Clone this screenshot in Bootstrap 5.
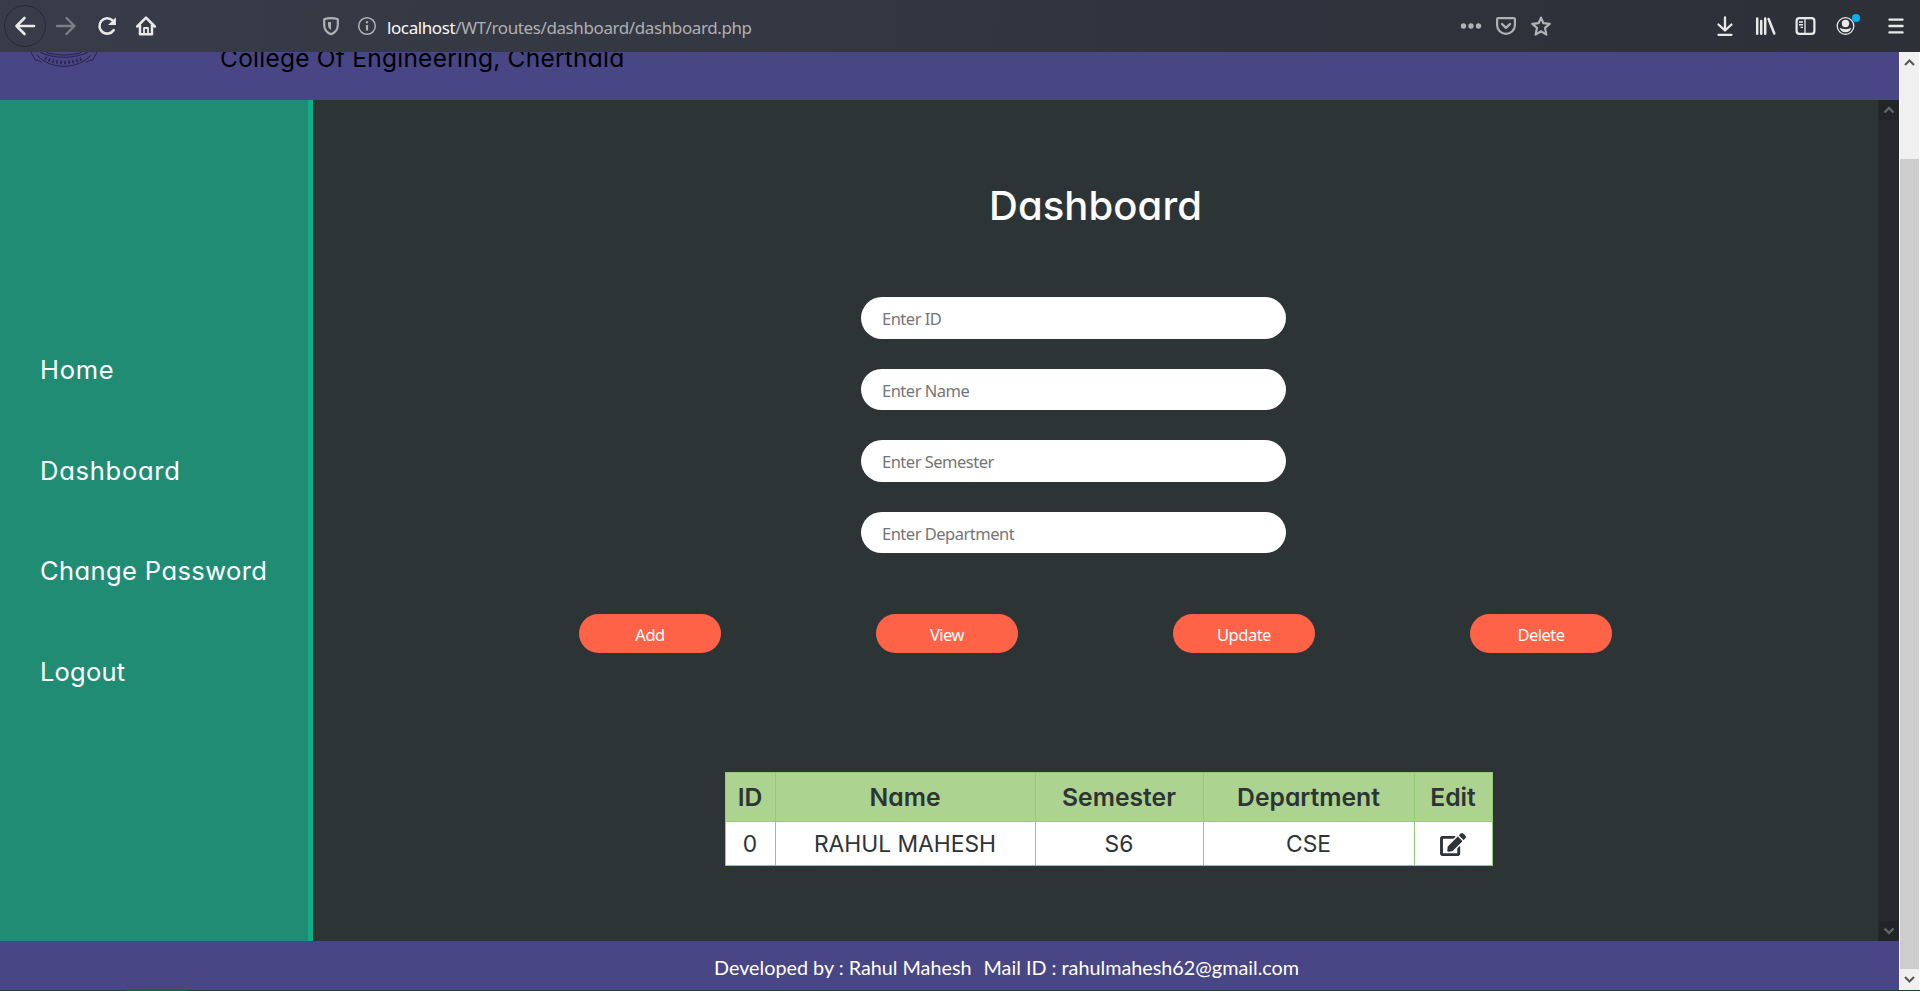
<!DOCTYPE html>
<html lang="en">
<head>
<meta charset="utf-8">
<title>Dashboard</title>
<link href="https://cdn.jsdelivr.net/npm/bootstrap@5.3.0/dist/css/bootstrap.min.css" rel="stylesheet">
<style>
  body{font-family:Inter,"Liberation Sans",sans-serif;font-feature-settings:"cv11";color:#fff;background:#2d3436;height:991px;line-height:1}
  svg{display:block;flex:none}
  .toolbar{height:52px;background:linear-gradient(95deg,#383c49 0%,#343842 35%,#30333d 65%,#2d3037 100%);color:#e9e9ea}
  .nav-icons{width:319px;padding-left:13px;gap:17px}
  .back-ring{width:42px;height:42px;border:1px solid #262932;border-radius:50%;margin:0 -9px}
  .address{width:1140px;gap:12px;color:#aeb0b4}
  .address .url{font:400 17px/24px "Noto Sans","Open Sans",sans-serif;margin-left:-4px;padding-top:3px;letter-spacing:-.4px}
  .address b{color:#f9f9fa;font-weight:400}
  .page-actions{width:254px;gap:11px;color:#b1b2b6}
  .tool-icons{gap:16.3px}
  .dot{width:8px;height:8px;background:#00b3f4;border-radius:50%;top:0;left:18px}
  .site-bar{height:48px;background:#484685}
  .crest{margin-left:30px;width:68px}
  .college{font-size:24.5px;line-height:30px;color:#000;margin-left:122px;margin-top:-9px;letter-spacing:.24px}
  .body-row{height:841px}
  .side{width:313px;background:#218c74;border-right:5px solid #10ac84;padding:247px 0 0 40px}
  .side a{height:100.7px;font-size:25.5px;line-height:45px;color:#fff;text-decoration:none;white-space:nowrap}
  .side a:nth-child(-n+2){letter-spacing:.75px}
  .side a:nth-child(3){letter-spacing:.4px}
  .side a:nth-child(4){letter-spacing:.2px}
  .title{font-size:40px;font-weight:500;line-height:48px;margin-top:82px;letter-spacing:.1px}
  .fields{width:425px;margin-top:67px;gap:30px}
  .shift{padding-right:44px}
  .fields .form-control{height:41.6px;border:0;border-radius:21px;padding:2px 21px 0;font:400 16.5px/20px "Noto Sans",sans-serif;letter-spacing:-.5px}
  .fields .form-control::placeholder{color:#757575;opacity:1}
  .actions{gap:155.4px;margin-top:61px}
  .actions .btn{width:141.6px;height:39px;border:0;border-radius:20px;background:#ff6347;color:#fff;font:400 16.5px/20px "Noto Sans",sans-serif;padding:3px 0 0;letter-spacing:-.5px}
  .records{width:768px;margin:119px 0 0 26px;table-layout:fixed;border-collapse:collapse;color:#2d3436;text-align:center}
  .records th,.records td{border:1px solid #98c978;padding:0;white-space:nowrap}
  .records th{background:#acd390;height:49px;font-size:24.7px;font-weight:600}
  .records td{background:#fff;height:44px;font-size:22.8px;padding-top:1px}
  .foot{height:49px;background:#484685;padding:1px 0 0 714px;font:400 19.8px/50px Lato,sans-serif;gap:12px;white-space:nowrap}
  .inner-scroll{width:21px;background:#25292b}
  .inner-scroll span{width:19px;height:20px;margin-left:1px;background:#212527}
  .outer-scroll{width:21px;background:#f0f0f0;border-left:1px solid #fff;border-right:1px solid #fff}
  .outer-scroll .cap-up{height:107px;padding-top:7px}
  .outer-scroll .thumb{height:810px;background:#cdcdcd}
  .edge{height:1px;background:linear-gradient(90deg,#0b4a2b 126px,#08692f 126px 187px,#0b4a2b 187px)}
</style>
</head>
<body class="overflow-hidden d-flex flex-column">
<header class="toolbar d-flex align-items-center flex-shrink-0">
  <div class="nav-icons d-flex align-items-center flex-shrink-0">
    <div class="back-ring d-flex align-items-center justify-content-center">
      <svg width="24" height="24" viewBox="0 0 24 24" fill="none" stroke="currentColor" stroke-width="2.6" stroke-linecap="round" stroke-linejoin="round"><path d="M21 12H4M11.500 4L3.500 12L11.500 20"/></svg>
    </div>
    <svg width="24" height="24" viewBox="0 0 24 24" fill="none" stroke="#7b7e87" stroke-width="2.4" stroke-linecap="round" stroke-linejoin="round"><path d="M3 12H20M12.500 4L20.500 12L12.500 20"/></svg>
    <svg width="24" height="24" viewBox="0 0 24 24" fill="none" stroke="currentColor" stroke-width="2.6" stroke-linecap="round"><path d="M18.600 16.200A7.700 7.700 0 1 1 17.500 6.400"/><path d="M20.900 3.200V11H13.100Z" fill="currentColor" stroke="none"/></svg>
    <svg width="24" height="24" viewBox="2 0 24 24" fill="none" stroke="currentColor" stroke-width="2.500" stroke-linecap="round" stroke-linejoin="round"><path d="M3.200 12.500L12 3.600L20.800 12.500M6 11.500V20.300H18V11.500"/><path d="M10 20V14H14V20" stroke-width="1.800"/></svg>
  </div>
  <div class="address d-flex align-items-center flex-shrink-0">
    <svg width="24" height="24" viewBox="0 0 24 24" fill="none" stroke="currentColor" stroke-width="2.200" stroke-linejoin="round"><path d="M12 4.200C9.500 4.200 7 4.600 5.200 5.300V11C5.200 15.200 8 18.800 12 20.200C16 18.800 18.800 15.200 18.800 11V5.300C17 4.600 14.500 4.200 12 4.200Z"/><path d="M12 8C10.800 8 9.800 8.100 9 8.300V11C9 13.200 10.100 15 12 16Z" fill="currentColor" stroke="none"/></svg>
    <svg width="24" height="24" viewBox="0 0 24 24" fill="none" stroke="currentColor" stroke-width="1.500"><circle cx="12" cy="12" r="8.300"/><path d="M12 11V16.500M12 7.300V9.300" stroke-width="2.200"/></svg>
    <div class="url"><b>localhost</b>/WT/routes/dashboard/dashboard.php</div>
  </div>
  <div class="page-actions d-flex align-items-center flex-shrink-0">
    <svg width="24" height="24" viewBox="0 0 24 24" fill="currentColor"><circle cx="4.500" cy="12" r="2.700"/><circle cx="12" cy="12" r="2.700"/><circle cx="19.500" cy="12" r="2.700"/></svg>
    <svg width="24" height="24" viewBox="0 0 24 24" fill="none" stroke="currentColor" stroke-width="2.200" stroke-linecap="round" stroke-linejoin="round"><path d="M4.200 4.200H19.800Q20.900 4.200 20.900 5.300V11C20.900 16 17 19.800 12 19.800S3.100 16 3.100 11V5.300Q3.100 4.200 4.200 4.200Z"/><path d="M8 10L12 13.800L16 10" stroke-width="2.400"/></svg>
    <svg width="24" height="24" viewBox="0 0 24 24" fill="none" stroke="currentColor" stroke-width="2.200" stroke-linejoin="round"><path d="M12 3.600L14.400 9.200L20.700 9.800L16 13.900L17.400 20.600L12 17.300L6.600 20.600L8 13.900L3.300 9.800L9.600 9.200Z"/></svg>
  </div>
  <div class="tool-icons d-flex align-items-center">
    <svg width="24" height="24" viewBox="0 0 24 24" fill="none" stroke="currentColor" stroke-width="2.300" stroke-linecap="round" stroke-linejoin="round"><path d="M12 3.500V16M5.500 10.500L12 16.500L18.500 10.500M5.500 20.800H18.500"/></svg>
    <svg width="24" height="24" viewBox="0 0 24 24" fill="none" stroke="currentColor" stroke-width="2.500" stroke-linecap="round"><path d="M4.200 4.500V19.800M8.200 7V19.800M12.200 4.500V19.800M15.600 5L21.300 19.500"/></svg>
    <svg width="24" height="24" viewBox="0 0 24 24" fill="none" stroke="currentColor" stroke-width="2.200"><rect x="2.600" y="4.200" width="17.800" height="15.600" rx="2.800"/><path d="M11 4V20" stroke-width="1.300"/><path d="M5 8H9M5 10.700H9M6.500 13.400H9" stroke-width="1.400"/></svg>
    <div class="position-relative">
      <svg width="24" height="24" viewBox="0 0 24 24"><circle cx="11.500" cy="12" r="8.300" fill="none" stroke="currentColor" stroke-width="1.300"/><circle cx="11.500" cy="9.500" r="3.700" fill="currentColor"/><path d="M5.700 13.700C7.500 14.200 8.500 15.200 11.500 15.200S15.500 14.200 17.300 13.700C16.500 16.800 14.300 18.200 11.500 18.200S6.500 16.800 5.700 13.700Z" fill="currentColor"/></svg>
      <span class="dot position-absolute"></span>
    </div>
    <svg class="ms-2" width="24" height="24" viewBox="-4 0 24 24" stroke="currentColor" stroke-width="2.400" stroke-linecap="round"><path d="M3.500 5.600H16.500M3.500 12H16.500M3.500 18.400H16.500"/></svg>
  </div>
</header>
<div class="d-flex flex-grow-1">
  <div class="flex-grow-1">
    <div class="site-bar d-flex overflow-hidden">
      <svg class="crest" width="68" height="16" viewBox="0 0 68 16" fill="none" stroke="#25254a" stroke-width="1"><path d="M16 0C24 4 44 4 52 0M1 0L5 8L10 9L12 11M67 0L63 8L58 9L56 11M10 0C22 7 46 7 58 0M7 3C20 18 48 18 61 3"/><path d="M15 6C26 12 42 12 53 6" stroke-width="3.500" stroke-dasharray="1.500 2.500"/></svg>
      <div class="college text-nowrap">College Of Engineering, Cherthala</div>
    </div>
    <div class="body-row d-flex">
      <nav class="side d-flex flex-column flex-shrink-0">
        <a href="#">Home</a><a href="#">Dashboard</a><a href="#">Change Password</a><a href="#">Logout</a>
      </nav>
      <main class="flex-grow-1 d-flex flex-column align-items-center">
        <h1 class="title mb-0">Dashboard</h1>
        <div class="shift">
          <form class="fields d-flex flex-column">
            <input class="form-control" placeholder="Enter ID">
            <input class="form-control" placeholder="Enter Name">
            <input class="form-control" placeholder="Enter Semester">
            <input class="form-control" placeholder="Enter Department">
          </form>
        </div>
        <div class="actions d-flex">
          <button class="btn">Add</button><button class="btn">View</button><button class="btn">Update</button><button class="btn">Delete</button>
        </div>
        <table class="records">
          <colgroup><col style="width:50px"><col style="width:260px"><col style="width:168px"><col style="width:211px"><col></colgroup>
          <tr><th>ID</th><th>Name</th><th>Semester</th><th>Department</th><th>Edit</th></tr>
          <tr><td>0</td><td>RAHUL MAHESH</td><td>S6</td><td>CSE</td><td><svg class="mx-auto" width="26" height="23" viewBox="0 0 576 512" fill="#2d3436"><path d="M402.600 83.200l90.200 90.200c3.800 3.800 3.800 10 0 13.800L274.400 405.600l-92.800 10.300c-12.400 1.400-22.900-9.100-21.500-21.500l10.300-92.800L388.800 83.200c3.800-3.800 10-3.800 13.800 0zm162-22.900l-48.800-48.800c-15.200-15.200-39.900-15.200-55.200 0l-35.400 35.400c-3.800 3.800-3.800 10 0 13.800l90.200 90.200c3.800 3.800 10 3.800 13.800 0l35.400-35.400c15.200-15.300 15.200-40 0-55.200zM384 346.200V448H64V128h229.800c3.200 0 6.200-1.300 8.500-3.500l40-40c7.600-7.600 2.200-20.500-8.500-20.500H48C21.500 64 0 85.500 0 112v352c0 26.500 21.500 48 48 48h352c26.500 0 48-21.500 48-48V306.200c0-10.700-12.900-16-20.500-8.500l-40 40c-2.200 2.300-3.500 5.300-3.500 8.500z"/></svg></td></tr>
        </table>
      </main>
      <div class="inner-scroll d-flex flex-column justify-content-between">
        <span class="d-flex justify-content-center align-items-center"><svg width="12" height="8" viewBox="0 0 12 8" fill="none" stroke="#63676a" stroke-width="2.400"><path d="M1.500 6.500L6 2L10.500 6.500"/></svg></span>
        <span class="d-flex justify-content-center align-items-center"><svg width="12" height="8" viewBox="0 0 12 8" fill="none" stroke="#63676a" stroke-width="2.400"><path d="M1.500 1.500L6 6L10.500 1.500"/></svg></span>
      </div>
    </div>
    <footer class="foot d-flex"><span>Developed by : Rahul Mahesh</span><span>Mail ID : rahulmahesh62@gmail.com</span></footer>
  </div>
  <div class="outer-scroll flex-shrink-0 d-flex flex-column align-items-stretch">
    <div class="cap-up d-flex justify-content-center align-items-start"><svg width="11" height="7" viewBox="0 0 11 7" fill="none" stroke="#555" stroke-width="2"><path d="M1 6L5.500 1.500L10 6"/></svg></div>
    <div class="thumb"></div>
    <svg class="mx-auto my-auto" width="11" height="7" viewBox="0 0 11 7" fill="none" stroke="#555" stroke-width="2"><path d="M1 1L5.500 5.500L10 1"/></svg>
  </div>
</div>
<div class="edge flex-shrink-0"></div>
<script src="https://cdn.jsdelivr.net/npm/bootstrap@5.3.0/dist/js/bootstrap.bundle.min.js"></script>
</body>
</html>
